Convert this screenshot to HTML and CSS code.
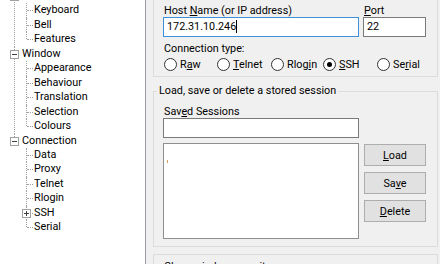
FILE: index.html
```html
<!DOCTYPE html>
<html lang="en">
<head>
  <meta charset="UTF-8">
  <title>PuTTY Configuration - Session</title>
  <link rel="stylesheet" href="styles.css">
</head>
<body>
  <div class="window">
    <nav class="tree-pane">
      <ul class="tree">
        <li class="root"><div class="row"><span class="box"></span>Terminal</div>
          <ul class="sub">
            <li><div class="row">Keyboard</div></li>
            <li><div class="row">Bell</div></li>
            <li><div class="row">Features</div></li>
          </ul>
        </li>
        <li class="root"><div class="row"><span class="box"></span>Window</div>
          <ul class="sub">
            <li><div class="row">Appearance</div></li>
            <li><div class="row">Behaviour</div></li>
            <li><div class="row">Translation</div></li>
            <li><div class="row">Selection</div></li>
            <li><div class="row">Colours</div></li>
          </ul>
        </li>
        <li class="root"><div class="row"><span class="box"></span>Connection</div>
          <ul class="sub">
            <li><div class="row">Data</div></li>
            <li><div class="row">Proxy</div></li>
            <li><div class="row">Telnet</div></li>
            <li><div class="row">Rlogin</div></li>
            <li><div class="row"><span class="box plus"></span>SSH</div></li>
            <li><div class="row">Serial</div></li>
          </ul>
        </li>
      </ul>
    </nav>

    <main class="main-pane">
      <div class="group dest">
        <div class="field-row">
          <div class="field host">
            <label>Host <u>N</u>ame (or IP address)</label>
            <div class="input focused">172.31.10.246<span class="caret"></span></div>
          </div>
          <div class="field port">
            <label><u>P</u>ort</label>
            <div class="input">22</div>
          </div>
        </div>
        <div class="conn-label">Connection type:</div>
        <div class="radios">
          <span class="radio"><i></i><span>R<u>a</u>w</span></span>
          <span class="radio"><i></i><span><u>T</u>elnet</span></span>
          <span class="radio"><i></i><span>Rlog<u>i</u>n</span></span>
          <span class="radio"><i class="on"></i><span><u>S</u>SH</span></span>
          <span class="radio"><i></i><span>Se<u>r</u>ial</span></span>
        </div>
      </div>

      <fieldset class="group sessions">
        <legend>Load, save or delete a stored session</legend>
        <label class="saved-label">Sav<u>e</u>d Sessions</label>
        <div class="input wide"></div>
        <div class="list-row">
          <div class="listbox"><span class="mark"></span></div>
          <div class="buttons">
            <button><u>L</u>oad</button>
            <button>Sa<u>v</u>e</button>
            <button><u>D</u>elete</button>
          </div>
        </div>
      </fieldset>

      <div class="group exit">
        <div class="exit-label">Close window on exit:</div>
      </div>
    </main>
  </div>
</body>
</html>
```

FILE: styles.css
```css
html, body {
  margin: 0;
  height: 100%;
  overflow: hidden;
}
body {
  font-family: Roboto, 'Liberation Sans', Arial, sans-serif;
  font-size: 10.8px;
  color: #000;
  background: #f0f0f0;
}
u {
  text-decoration: underline;
  text-underline-offset: 1px;
}
.window {
  display: flex;
  height: 264px;
}

/* tree view */
.tree-pane {
  width: 145px;
  flex: none;
  background: #fff;
  border-right: 1px solid #9a9da3;
  overflow: hidden;
}
.tree, .tree ul {
  list-style: none;
  margin: 0;
  padding: 0;
}
.tree {
  margin-top: -11.2px;
}
.tree li {
  position: relative;
}
.row {
  height: 14.47px;
  line-height: 14.47px;
  white-space: nowrap;
}
.root > .row {
  padding-left: 22px;
}
.sub > li > .row {
  padding-left: 34px;
}
.root::before {
  content: "";
  position: absolute;
  left: 14px;
  top: 0;
  bottom: 0;
  border-left: 1px dotted #a0a0a0;
}
.root:last-child::before {
  bottom: auto;
  height: 7px;
}
.sub > li::before {
  content: "";
  position: absolute;
  left: 26px;
  top: 0;
  bottom: 0;
  border-left: 1px dotted #a0a0a0;
}
.sub > li:last-child::before {
  bottom: auto;
  height: 7px;
}
.sub > li::after {
  content: "";
  position: absolute;
  left: 27px;
  top: 7px;
  width: 6px;
  border-top: 1px dotted #a0a0a0;
}
.box {
  position: absolute;
  left: 10px;
  top: 3px;
  width: 7px;
  height: 7px;
  border: 1px solid #a0a0a0;
  background: #fff;
  z-index: 1;
}
.box::before, .box.plus::after {
  content: "";
  position: absolute;
  left: 1px;
  top: 3px;
  width: 5px;
  height: 1px;
  background: #404040;
}
.box.plus {
  left: 22px;
}
.box.plus::after {
  left: 3px;
  top: 1px;
  width: 1px;
  height: 5px;
}

/* right panel */
.main-pane {
  flex: 1;
  padding: 0 2px 0 7px;
}
.group {
  border: 1px solid #dcdcdc;
  margin: 0;
  padding: 0 10px 0 9px;
}
.dest {
  margin-top: -12px;
  padding-top: 15px;
  padding-bottom: 4px;
}
.field-row {
  display: flex;
  gap: 4px;
}
.field label {
  display: block;
  line-height: 13px;
  padding-left: 1px;
}
.host {
  width: 196px;
}
.port {
  width: 63px;
}
.input {
  box-sizing: border-box;
  height: 20px;
  line-height: 18px;
  padding-left: 3px;
  background: #fff;
  border: 1px solid #7a7a7a;
  white-space: nowrap;
}
.input.focused {
  border-color: #3f8fd9;
}
.caret {
  display: inline-block;
  width: 1px;
  height: 13px;
  background: #000;
  vertical-align: -3px;
}
.conn-label {
  margin-top: 5px;
  line-height: 13px;
  padding-left: 1px;
}
.radios {
  display: grid;
  grid-template-columns: 53px 54px 52px 54px auto;
  margin-top: 1px;
  padding-left: 1px;
  height: 16px;
  align-items: center;
}
.radio {
  display: flex;
  align-items: center;
  gap: 3px;
  white-space: nowrap;
}
.radio i {
  box-sizing: border-box;
  flex: none;
  width: 13px;
  height: 13px;
  border: 1px solid #333;
  border-radius: 50%;
  background: #fff;
  display: flex;
  align-items: center;
  justify-content: center;
}
.radio i.on::after {
  content: "";
  width: 5px;
  height: 5px;
  border-radius: 50%;
  background: #000;
}

.sessions {
  margin-top: 7px;
  padding-top: 7px;
  padding-bottom: 7px;
  min-width: 0;
}
.sessions legend {
  line-height: 14px;
  padding: 0 2px;
  margin-left: -6px;
}
.saved-label {
  display: block;
  line-height: 13px;
  padding-left: 1px;
}
.input.wide {
  width: 196px;
}
.list-row {
  display: flex;
  gap: 5px;
  margin-top: 5px;
}
.listbox {
  box-sizing: border-box;
  width: 196px;
  height: 96px;
  background: #fff;
  border: 1px solid #8f8f8f;
  padding: 16px 0 0 3px;
}
.mark {
  display: block;
  width: 1px;
  height: 3px;
  background: #d9a25e;
}
.buttons {
  display: flex;
  flex-direction: column;
  gap: 6px;
  padding-top: 1px;
}
.buttons button {
  width: 62px;
  height: 22px;
  padding: 0;
  font: inherit;
  color: #000;
  background: #e1e1e1;
  border: 1px solid #adadad;
}

.exit {
  margin-top: 7px;
  padding-top: 5px;
  height: 40px;
}
.exit-label {
  line-height: 13px;
  padding-left: 1px;
}
```
